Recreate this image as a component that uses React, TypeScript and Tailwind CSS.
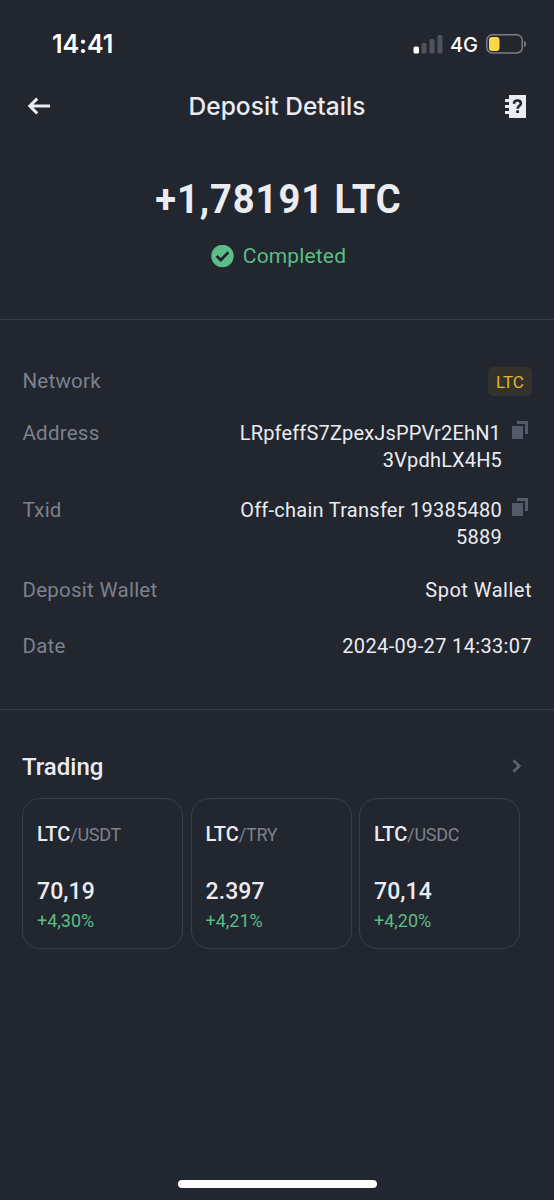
import React from 'react';

const pairs = [
  { base: 'LTC', quote: 'USDT', price: '70,19', change: '+4,30%' },
  { base: 'LTC', quote: 'TRY', price: '2.397', change: '+4,21%' },
  { base: 'LTC', quote: 'USDC', price: '70,14', change: '+4,20%' },
];

const CopyIcon: React.FC = () => (
  <svg width="16" height="18" viewBox="0 0 16 18" fill="#535a68">
    <path d="M0 5h11v13H0z" />
    <path d="M5 0h11v13h-3V3H5z" />
  </svg>
);

const StatusBar: React.FC = () => (
  <div className="flex h-[88px] items-center justify-between pl-[52px] pr-[27px] font-['Inter'] text-white">
    <span className="pt-px text-[25px] font-semibold leading-none tracking-[-0.1px]">14:41</span>
    <div className="flex items-center">
      <svg width="30" height="20" viewBox="0 0 30 20">
        <rect x="0.5" y="12.5" width="5.5" height="7" rx="1.6" fill="#fff" />
        <rect x="8.5" y="9" width="5" height="10.5" rx="1.6" fill="#4e525b" />
        <rect x="16.5" y="5" width="5" height="14.5" rx="1.6" fill="#4e525b" />
        <rect x="24.5" y="1" width="5" height="18.5" rx="1.6" fill="#4e525b" />
      </svg>
      <span className="ml-[7px] w-[36px] pt-px text-[20px] font-medium leading-none tracking-[-0.2px]">4G</span>
      <svg width="41" height="20" viewBox="0 0 41 20">
        <rect x="0.8" y="0.8" width="35.5" height="18.2" rx="5.5" fill="none" stroke="#7b7e85" strokeWidth="1.5" />
        <rect x="3" y="3" width="10.5" height="14" rx="3" fill="#fbd84a" />
        <path d="M38.2 6.8c2.6 1 2.6 5.2 0 6.2z" fill="#7b7e85" />
      </svg>
    </div>
  </div>
);

const Header: React.FC = () => (
  <header className="grid h-9 grid-cols-[1fr_auto_1fr] items-center pl-[27px] pr-[28px]">
    <svg width="23" height="18" viewBox="0 0 23 18" fill="none" stroke="#eaecf2" strokeWidth="3">
      <path d="M23 9H3M10.2 1.6L2.8 9l7.4 7.4" />
    </svg>
    <h1 className="pl-px pt-px font-['Inter'] text-[24.5px] font-medium leading-none tracking-[0.05px] text-[#eaecf2]">
      Deposit Details
    </h1>
    <svg className="justify-self-end" width="21" height="23" viewBox="0 0 21 23" fill="#eaecf2">
      <path d="M4 0h17v23H4v-4H0v-3h4v-3H0v-3h4V7H0V4h4z" />
      <path d="M9 8.8C9 6.6 10.5 5.5 12.4 5.5s3.5 1.1 3.5 3c0 2.3-3.3 2.4-3.3 5.2" fill="none" stroke="#22262f" strokeWidth="2.6" />
      <path d="M11.2 15.3h2.8V18h-2.8z" fill="#22262f" />
    </svg>
  </header>
);

const Label: React.FC<{ children: React.ReactNode }> = ({ children }) => (
  <span className="pl-[0.5px] text-[20.5px] leading-[27px] tracking-[0.25px] text-[#7c818d]">{children}</span>
);

const App: React.FC = () => {
  return (
    <div className="flex h-[1200px] w-full flex-col bg-[#22262f] font-['Roboto'] text-[#eaecf2]">
      <StatusBar />
      <Header />

      <section className="flex h-[196px] flex-col items-center border-b border-[#373d49] pt-[51px]">
        <p className="scale-x-[0.93] pl-[3px] text-[41px] font-bold leading-[48px] tracking-[1px]">+1,78191 LTC</p>
        <div className="mt-[20px] flex items-center gap-[9px] pl-[3px]">
          <svg width="23" height="23" viewBox="0 0 23 23">
            <circle cx="11.5" cy="11" r="11.2" fill="#5cbd87" />
            <path d="M5.6 11.1l4.2 4 7.6-7.8" fill="none" stroke="#22262f" strokeWidth="2.8" />
          </svg>
          <span className="text-[21px] leading-[26px] tracking-[0.15px] text-[#5cbd87]">Completed</span>
        </div>
      </section>

      <section className="flex h-[390px] flex-col border-b border-[#373d49] pl-[22px] pr-[22px] pt-[47px] text-[20px] leading-[27px]">
        <div className="flex items-center justify-between">
          <Label>Network</Label>
          <span className="flex h-[29px] w-[44px] items-center justify-center rounded-[5px] bg-[#33322d] pt-px text-[17px] text-[#e0b92f]">
            LTC
          </span>
        </div>

        <div className="mt-[24px] flex justify-between">
          <Label>Address</Label>
          <div className="flex gap-[10px] pr-1">
            <p className="text-right tracking-[0.16px]">
              <span className="block pr-px">LRpfeffS7ZpexJsPPVr2EhN1</span>
              <span className="block">3VpdhLX4H5</span>
            </p>
            <div className="pt-px"><CopyIcon /></div>
          </div>
        </div>

        <div className="mt-[23px] flex justify-between">
          <Label>Txid</Label>
          <div className="flex gap-[10px] pr-1">
            <p className="text-right tracking-[0.26px]">
              <span className="block">Off-chain Transfer 19385480</span>
              <span className="block">5889</span>
            </p>
            <div className="pt-px"><CopyIcon /></div>
          </div>
        </div>

        <div className="mt-[26px] flex justify-between">
          <Label>Deposit Wallet</Label>
          <span className="tracking-[0.5px]">Spot Wallet</span>
        </div>

        <div className="mt-[29px] flex justify-between">
          <Label>Date</Label>
          <span className="tracking-[0.35px]">2024-09-27 14:33:07</span>
        </div>
      </section>

      <section className="pl-[22px] pt-[41px]">
        <div className="flex items-center justify-between pr-[32px]">
          <h2 className="text-[24px] font-medium leading-[32px]">Trading</h2>
          <svg className="mb-[2px]" width="10" height="14" viewBox="0 0 10 14" fill="none" stroke="#5c626e" strokeWidth="2.8">
            <path d="M1.4 1.2L7.2 7l-5.8 5.8" />
          </svg>
        </div>

        <div className="mt-[15px] flex gap-[7.5px]">
          {pairs.map((pair) => (
            <div
              key={pair.quote}
              className="flex h-[151px] w-[161px] flex-col rounded-[18px] border-[1.5px] border-[#393e4a] pl-[14px] pt-[22px]"
            >
              <div className="leading-[26px]">
                <span className="text-[20px] font-medium">{pair.base}</span>
                <span className="text-[18px] tracking-[-0.3px] text-[#7c818d]">/{pair.quote}</span>
              </div>
              <span className="mt-[29px] text-[23px] font-medium leading-[28px] tracking-[0.1px]">{pair.price}</span>
              <span className="mt-[3px] text-[18px] leading-[24px] text-[#5cbd87]">{pair.change}</span>
            </div>
          ))}
        </div>
      </section>

      <div className="mb-[12px] mt-auto h-2 w-[199px] self-center rounded-full bg-white" />
    </div>
  );
};

export default App;
